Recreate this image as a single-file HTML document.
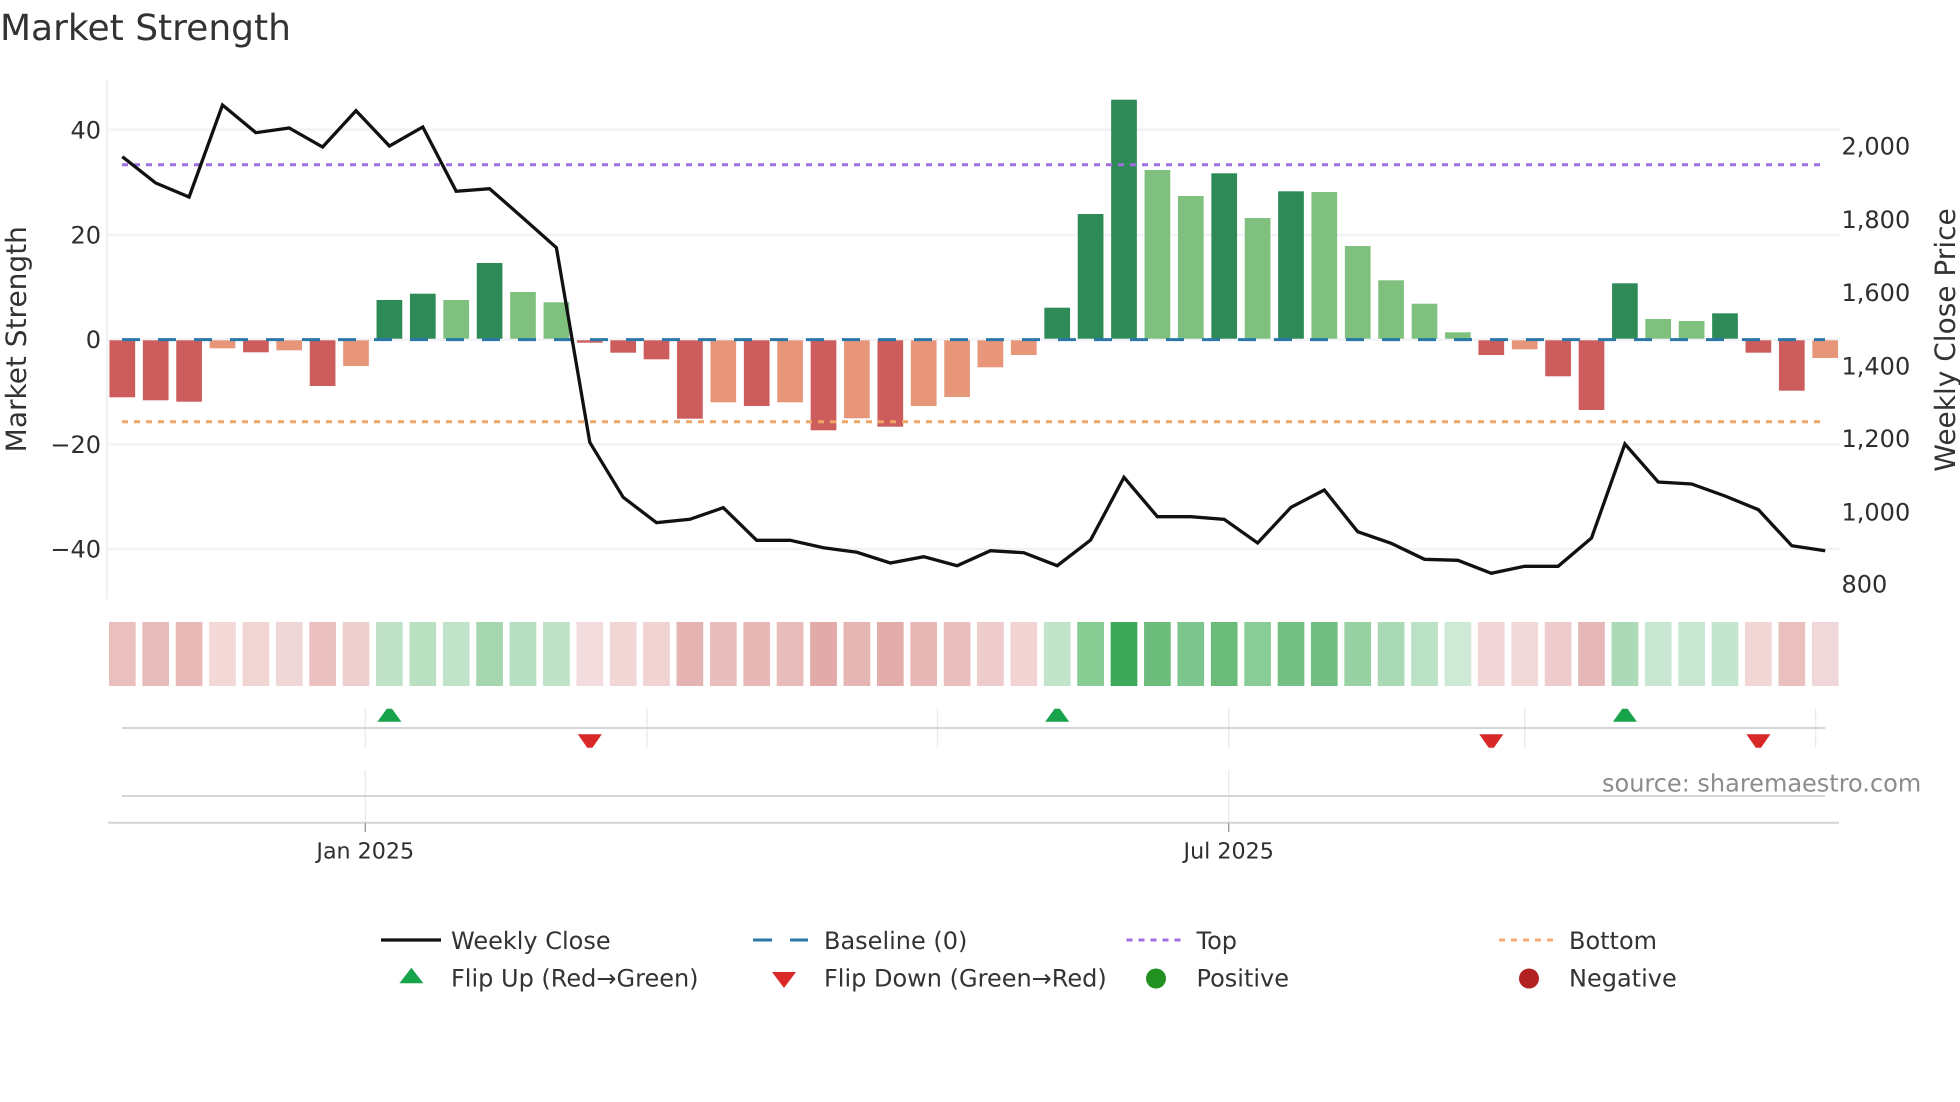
<!DOCTYPE html>
<html lang="en">
<head>
<meta charset="utf-8">
<title>Market Strength</title>
<style>
html,body{margin:0;padding:0;background:#fff;width:1960px;height:1102px;overflow:hidden}
svg{display:block;position:absolute;left:0;top:0}
text{font-family:"DejaVu Sans","Liberation Sans",sans-serif;text-rendering:geometricPrecision}
.tick{font-size:24px;fill:#2e2e2e}
.date{font-size:22.2px;fill:#2e2e2e}
.ax{font-size:28px;fill:#333}
.leg{font-size:24px;fill:#333}
</style>
</head>
<body>
<svg width="1960" height="1102" viewBox="0 0 1960 1102" xmlns="http://www.w3.org/2000/svg">
<rect width="1960" height="1102" fill="#fff"/>
<text x="0" y="40" font-size="36" fill="#333">Market Strength</text>

<!-- grid -->
<g stroke="#f0f2f5" stroke-width="2.4" fill="none">
<path d="M107 129.7H1840M107 235H1840M107 339.6H1840M107 444.3H1840M107 549H1840"/>
<path d="M107 80V599"/>
</g>

<!-- bars -->
<g fill="#cd5c5c">
<rect x="109.45" y="340.3" width="25.7" height="57"/>
<rect x="142.85" y="340.3" width="25.7" height="60"/>
<rect x="176.25" y="340.3" width="25.7" height="61.4"/>
<rect x="243.05" y="340.3" width="25.7" height="12"/>
<rect x="309.75" y="340.3" width="25.7" height="45.7"/>
<rect x="576.95" y="340.3" width="25.7" height="2.4"/>
<rect x="610.35" y="340.3" width="25.7" height="12.4"/>
<rect x="643.65" y="340.3" width="25.7" height="19"/>
<rect x="677.05" y="340.3" width="25.7" height="78.4"/>
<rect x="743.85" y="340.3" width="25.7" height="65.7"/>
<rect x="810.65" y="340.3" width="25.7" height="90"/>
<rect x="877.45" y="340.3" width="25.7" height="86.4"/>
<rect x="1478.45" y="340.3" width="25.7" height="14.7"/>
<rect x="1545.25" y="340.3" width="25.7" height="36"/>
<rect x="1578.65" y="340.3" width="25.7" height="69.7"/>
<rect x="1745.55" y="340.3" width="25.7" height="12.4"/>
<rect x="1778.95" y="340.3" width="25.7" height="50.4"/>
</g>
<g fill="#e7967a">
<rect x="209.65" y="340.3" width="25.7" height="8"/>
<rect x="276.35" y="340.3" width="25.7" height="10"/>
<rect x="343.15" y="340.3" width="25.7" height="25.7"/>
<rect x="710.45" y="340.3" width="25.7" height="62"/>
<rect x="777.25" y="340.3" width="25.7" height="62"/>
<rect x="844.05" y="340.3" width="25.7" height="78"/>
<rect x="910.85" y="340.3" width="25.7" height="65.7"/>
<rect x="944.25" y="340.3" width="25.7" height="56.7"/>
<rect x="977.55" y="340.3" width="25.7" height="27"/>
<rect x="1010.95" y="340.3" width="25.7" height="14.7"/>
<rect x="1511.85" y="340.3" width="25.7" height="9"/>
<rect x="1812.35" y="340.3" width="25.7" height="17.7"/>
</g>
<g fill="#2e8b57">
<rect x="376.55" y="300" width="25.7" height="38.7"/>
<rect x="409.95" y="293.7" width="25.7" height="45"/>
<rect x="476.75" y="263" width="25.7" height="75.7"/>
<rect x="1044.35" y="307.7" width="25.7" height="31"/>
<rect x="1077.75" y="214" width="25.7" height="124.7"/>
<rect x="1111.15" y="99.7" width="25.7" height="239"/>
<rect x="1211.35" y="173.3" width="25.7" height="165.4"/>
<rect x="1278.15" y="191.3" width="25.7" height="147.4"/>
<rect x="1612.05" y="283.3" width="25.7" height="55.4"/>
<rect x="1712.15" y="313.3" width="25.7" height="25.4"/>
</g>
<g fill="#7fc07f">
<rect x="443.35" y="300" width="25.7" height="38.7"/>
<rect x="510.15" y="292" width="25.7" height="46.7"/>
<rect x="543.55" y="302.3" width="25.7" height="36.4"/>
<rect x="1144.55" y="170" width="25.7" height="168.7"/>
<rect x="1177.95" y="196" width="25.7" height="142.7"/>
<rect x="1244.75" y="218" width="25.7" height="120.7"/>
<rect x="1311.45" y="192" width="25.7" height="146.7"/>
<rect x="1344.85" y="246" width="25.7" height="92.7"/>
<rect x="1378.25" y="280.3" width="25.7" height="58.4"/>
<rect x="1411.65" y="303.7" width="25.7" height="35"/>
<rect x="1445.05" y="332.3" width="25.7" height="6.4"/>
<rect x="1645.35" y="319" width="25.7" height="19.7"/>
<rect x="1678.75" y="321" width="25.7" height="17.7"/>
</g>

<!-- reference lines -->
<path d="M122 339.6H1825" stroke="#2b78a8" stroke-width="3" stroke-dasharray="18 18" fill="none"/>
<path d="M122 164.7H1821" stroke="#a06fe0" stroke-width="3" stroke-dasharray="6 6" fill="none"/>
<path d="M122 421.7H1821" stroke="#f0a667" stroke-width="3" stroke-dasharray="6 6" fill="none"/>

<!-- price line -->
<polyline fill="none" stroke="#111" stroke-width="3.3" stroke-linejoin="miter" points="122.3,156.7 155.7,183 189.1,197 222.5,105 255.9,132.7 289.2,128 322.6,147 356,110.7 389.4,146 422.8,127 456.2,191.3 489.6,188.7 523,218 556.4,247.7 589.8,442.3 623.2,497.3 656.5,522.7 689.9,519.3 723.3,507.7 756.7,540.3 790.1,540.3 823.5,547.7 856.9,552.3 890.3,563 923.7,556.7 957.1,565.7 990.4,550.7 1023.8,552.7 1057.2,565.7 1090.6,540 1124,477.3 1157.4,516.7 1190.8,516.7 1224.2,519.3 1257.6,543 1291,507.3 1324.3,490 1357.7,531.7 1391.1,543.3 1424.5,559.3 1457.9,560.3 1491.3,573.3 1524.7,566.3 1558.1,566.3 1591.5,538 1624.9,444 1658.2,482 1691.6,484 1725,496 1758.4,509.7 1791.8,545.7 1825.2,550.7"/>

<!-- strip -->
<g opacity="0.98">
<rect x="108.95" y="622" width="26.7" height="64" fill="#eabfbd"/>
<rect x="142.35" y="622" width="26.7" height="64" fill="#e8bbb9"/>
<rect x="175.75" y="622" width="26.7" height="64" fill="#e7b8b6"/>
<rect x="209.15" y="622" width="26.7" height="64" fill="#f2d9d7"/>
<rect x="242.55" y="622" width="26.7" height="64" fill="#f0d5d3"/>
<rect x="275.85" y="622" width="26.7" height="64" fill="#f0d7d7"/>
<rect x="309.25" y="622" width="26.7" height="64" fill="#eabfbf"/>
<rect x="342.65" y="622" width="26.7" height="64" fill="#eecfcd"/>
<rect x="376.05" y="622" width="26.7" height="64" fill="#bfe3c6"/>
<rect x="409.45" y="622" width="26.7" height="64" fill="#b9e0c1"/>
<rect x="442.85" y="622" width="26.7" height="64" fill="#c0e3c8"/>
<rect x="476.25" y="622" width="26.7" height="64" fill="#a5d6ae"/>
<rect x="509.65" y="622" width="26.7" height="64" fill="#b5dec0"/>
<rect x="543.05" y="622" width="26.7" height="64" fill="#bce2c6"/>
<rect x="576.45" y="622" width="26.7" height="64" fill="#f2dcdd"/>
<rect x="609.85" y="622" width="26.7" height="64" fill="#f1d6d5"/>
<rect x="643.15" y="622" width="26.7" height="64" fill="#f0d3d2"/>
<rect x="676.55" y="622" width="26.7" height="64" fill="#e5b2b0"/>
<rect x="709.95" y="622" width="26.7" height="64" fill="#e9bcba"/>
<rect x="743.35" y="622" width="26.7" height="64" fill="#e8b7b5"/>
<rect x="776.75" y="622" width="26.7" height="64" fill="#e8bbb9"/>
<rect x="810.15" y="622" width="26.7" height="64" fill="#e2a9a7"/>
<rect x="843.55" y="622" width="26.7" height="64" fill="#e6b5b3"/>
<rect x="876.95" y="622" width="26.7" height="64" fill="#e2abaa"/>
<rect x="910.35" y="622" width="26.7" height="64" fill="#e7b7b5"/>
<rect x="943.75" y="622" width="26.7" height="64" fill="#e9bdbb"/>
<rect x="977.05" y="622" width="26.7" height="64" fill="#eecccb"/>
<rect x="1010.45" y="622" width="26.7" height="64" fill="#f0d3d2"/>
<rect x="1043.85" y="622" width="26.7" height="64" fill="#c1e4c9"/>
<rect x="1077.25" y="622" width="26.7" height="64" fill="#85cb91"/>
<rect x="1110.65" y="622" width="26.7" height="64" fill="#39a755"/>
<rect x="1144.05" y="622" width="26.7" height="64" fill="#6abb7a"/>
<rect x="1177.45" y="622" width="26.7" height="64" fill="#7bc48a"/>
<rect x="1210.85" y="622" width="26.7" height="64" fill="#69bb79"/>
<rect x="1244.25" y="622" width="26.7" height="64" fill="#88cb96"/>
<rect x="1277.65" y="622" width="26.7" height="64" fill="#72be81"/>
<rect x="1310.95" y="622" width="26.7" height="64" fill="#70bd80"/>
<rect x="1344.35" y="622" width="26.7" height="64" fill="#96d1a3"/>
<rect x="1377.75" y="622" width="26.7" height="64" fill="#a9d9b5"/>
<rect x="1411.15" y="622" width="26.7" height="64" fill="#bae1c5"/>
<rect x="1444.55" y="622" width="26.7" height="64" fill="#cee9d6"/>
<rect x="1477.95" y="622" width="26.7" height="64" fill="#f2d5d6"/>
<rect x="1511.35" y="622" width="26.7" height="64" fill="#f1d8d9"/>
<rect x="1544.75" y="622" width="26.7" height="64" fill="#eecccd"/>
<rect x="1578.15" y="622" width="26.7" height="64" fill="#e6b6b6"/>
<rect x="1611.55" y="622" width="26.7" height="64" fill="#abd9b6"/>
<rect x="1644.85" y="622" width="26.7" height="64" fill="#c7e6d1"/>
<rect x="1678.25" y="622" width="26.7" height="64" fill="#c6e7d1"/>
<rect x="1711.65" y="622" width="26.7" height="64" fill="#c3e5cf"/>
<rect x="1745.05" y="622" width="26.7" height="64" fill="#f2d5d5"/>
<rect x="1778.45" y="622" width="26.7" height="64" fill="#eabfbe"/>
<rect x="1811.85" y="622" width="26.7" height="64" fill="#f0d7da"/>
</g>

<!-- lanes -->
<g stroke="#e9ebef" stroke-width="1.4" fill="none">
<path d="M365.3 708V748M647 708V748M937.5 708V748M1228.7 708V748M1524.7 708V748M1815.6 708V748"/>
<path d="M365.3 770V822M1228.7 770V822"/>
</g>
<path d="M122 728H1825M122 796H1825" stroke="#d4d5d8" stroke-width="2" fill="none"/>
<path d="M108 822.7H1839" stroke="#d2d3d6" stroke-width="2" fill="none"/>
<path d="M365.3 823V832M1228.7 823V832" stroke="#9a9a9a" stroke-width="1.4" fill="none"/>

<g fill="#16a34a">
<polygon points="377.4,721.7 401.4,721.7 392,708.7 386.8,708.7"/>
<polygon points="1045.2,721.7 1069.2,721.7 1059.8,708.7 1054.6,708.7"/>
<polygon points="1612.9,721.7 1636.9,721.7 1627.5,708.7 1622.3,708.7"/>
</g>
<g fill="#d92828">
<polygon points="577.8,734.3 601.8,734.3 592.4,747.7 587.2,747.7"/>
<polygon points="1479.3,734.3 1503.3,734.3 1493.9,747.7 1488.7,747.7"/>
<polygon points="1746.4,734.3 1770.4,734.3 1761,747.7 1755.8,747.7"/>
</g>

<!-- axis labels -->
<text class="tick" x="101" y="138.4" text-anchor="end">40</text>
<text class="tick" x="101" y="243.5" text-anchor="end">20</text>
<text class="tick" x="101" y="348.2" text-anchor="end">0</text>
<text class="tick" x="101" y="452.8" text-anchor="end">−20</text>
<text class="tick" x="101" y="557.5" text-anchor="end">−40</text>

<text class="tick" x="1841.5" y="154.6">2,000</text>
<text class="tick" x="1841.5" y="227.8">1,800</text>
<text class="tick" x="1841.5" y="300.9">1,600</text>
<text class="tick" x="1841.5" y="374.3">1,400</text>
<text class="tick" x="1841.5" y="446.9">1,200</text>
<text class="tick" x="1841.5" y="520.3">1,000</text>
<text class="tick" x="1841.5" y="592.7">800</text>

<text class="ax" text-anchor="middle" transform="translate(26 339.2) rotate(-90)">Market Strength</text>
<text class="ax" text-anchor="middle" transform="translate(1955 340) rotate(-90)">Weekly Close Price</text>

<text class="date" x="365.3" y="858.5" text-anchor="middle">Jan 2025</text>
<text class="date" x="1228.7" y="858.5" text-anchor="middle">Jul 2025</text>

<text x="1602" y="791.7" font-size="24" fill="#8c8c8c">source: sharemaestro.com</text>

<!-- legend -->
<path d="M381 940H441" stroke="#111" stroke-width="3.3" fill="none"/>
<text class="leg" x="451" y="949">Weekly Close</text>
<path d="M753 940H772M790 940H808" stroke="#2b78a8" stroke-width="3" fill="none"/>
<text class="leg" x="824" y="949">Baseline (0)</text>
<path d="M1126.5 940H1182" stroke="#a06fe0" stroke-width="3" stroke-dasharray="6 6" fill="none"/>
<text class="leg" x="1196.5" y="949">Top</text>
<path d="M1499 940H1555" stroke="#f4ab74" stroke-width="3" stroke-dasharray="6 6" fill="none"/>
<text class="leg" x="1569" y="949">Bottom</text>

<polygon points="399.4,983.3 423.4,983.3 411.4,967.7" fill="#16a34a"/>
<text class="leg" x="451" y="986.6">Flip Up (Red→Green)</text>
<polygon points="772,972 796,972 784,988" fill="#d92828"/>
<text class="leg" x="824" y="986.6">Flip Down (Green→Red)</text>
<circle cx="1156" cy="978.5" r="10" fill="#21911f"/>
<text class="leg" x="1196.5" y="986.6">Positive</text>
<circle cx="1529" cy="978.5" r="10" fill="#b22222"/>
<text class="leg" x="1569" y="986.6">Negative</text>
</svg>
</body>
</html>
